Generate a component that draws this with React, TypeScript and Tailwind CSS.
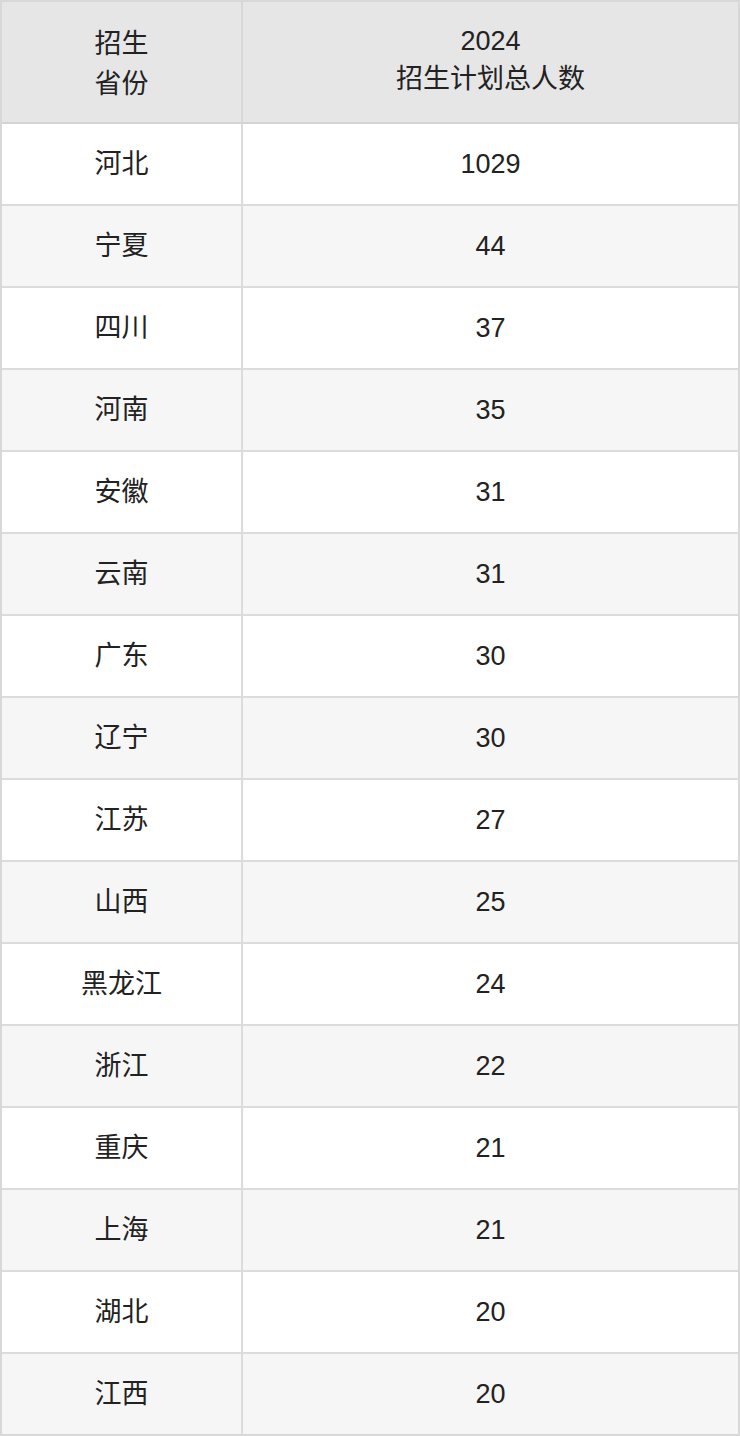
const rows: [string, string][] = [
  ["河北", "1029"],
  ["宁夏", "44"],
  ["四川", "37"],
  ["河南", "35"],
  ["安徽", "31"],
  ["云南", "31"],
  ["广东", "30"],
  ["辽宁", "30"],
  ["江苏", "27"],
  ["山西", "25"],
  ["黑龙江", "24"],
  ["浙江", "22"],
  ["重庆", "21"],
  ["上海", "21"],
  ["湖北", "20"],
  ["江西", "20"],
];

export default function App() {
  return (
    <div
      className="w-[740px] bg-white text-[#222] text-[27px] leading-[38px]"
      style={{ fontFamily: '"Liberation Sans", "Noto Sans CJK SC", sans-serif' }}
    >
      <div className="border-2 border-[#d8d8d8]">
        <div className="grid grid-cols-[241px_1fr] h-[122px] bg-[#e6e6e6] border-b-2 border-[#d4d4d4]">
          <div className="flex flex-col items-center justify-center leading-[40px] pt-1 border-r-2 border-[#d8d8d8]">
            <span>招生</span>
            <span>省份</span>
          </div>
          <div className="flex flex-col items-center justify-center pb-1">
            <span>2024</span>
            <span>招生计划总人数</span>
          </div>
        </div>
        {rows.map(([prov, num], i) => (
          <div
            key={i}
            className={
              "grid grid-cols-[241px_1fr] " +
              (i === rows.length - 1 ? "h-[80px] " : "h-[82px] border-b-2 border-[#dcdcdc] ") +
              (i % 2 === 1 ? "bg-[#f6f6f6]" : "bg-white")
            }
          >
            <div className="flex items-center justify-center border-r-2 border-[#dcdcdc]">{prov}</div>
            <div className="flex items-center justify-center">{num}</div>
          </div>
        ))}
      </div>
    </div>
  );
}
